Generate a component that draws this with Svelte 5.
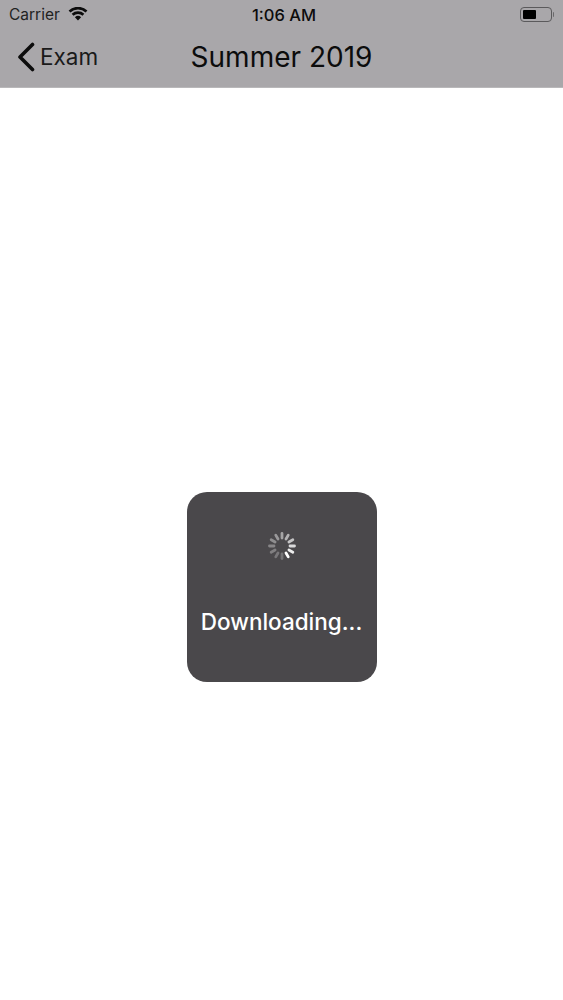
<script lang="ts">
  // spokes fade counter-clockwise from the brightest one, at 150deg
  const SPOKES = [0.58, 0.68, 0.8, 0.9, 1, 0.24, 0.26, 0.3, 0.34, 0.38, 0.44, 0.5];
</script>

<div class="screen">
  <header class="bar">
    <div class="status">
      <div class="status__left">
        <span class="carrier">Carrier</span>
        <svg class="wifi" width="20" height="14" viewBox="0 0 20 14" aria-hidden="true">
          <path d="M10 13.6 6.9 10.2a4.6 4.6 0 0 1 6.2 0Z" fill="#0c0c0c" />
          <path d="M5.500 8.700 3.700 6.800a9.200 9.200 0 0 1 12.600 0l-1.800 1.900a6.700 6.700 0 0 0-9 0Z" fill="#0c0c0c" />
          <path d="M2.400 5.400.6 3.500a13.800 13.800 0 0 1 18.800 0l-1.800 1.900a11.200 11.200 0 0 0-15.200 0Z" fill="#0c0c0c" />
        </svg>
      </div>
      <span class="time">1:06 AM</span>
      <div class="battery">
        <div class="battery__body"><div class="battery__fill"></div></div>
        <div class="battery__cap"></div>
      </div>
    </div>
    <nav class="nav">
      <div class="back">
        <svg width="20" height="30" viewBox="0 0 20 30" aria-hidden="true">
          <path d="M16.500 2.500 4 15l12.500 12.500" fill="none" stroke="#0c0c0c" stroke-width="3.600" stroke-linecap="round" stroke-linejoin="round" />
        </svg>
        <span>Exam</span>
      </div>
      <h1>Summer 2019</h1>
    </nav>
  </header>

  <main class="content">
    <div class="toast">
      <svg class="spinner" width="30" height="30" viewBox="-15 -15 30 30" aria-hidden="true">
        {#each SPOKES as o, i}
          <line
            x1="0"
            y1="-8"
            x2="0"
            y2="-12.500"
            stroke="#fff"
            stroke-width="2.800"
            stroke-linecap="round"
            opacity={o}
            transform="rotate({i * 30 + 30})"
          />
        {/each}
      </svg>
      <div class="label">Downloading...</div>
    </div>
  </main>
</div>

<style>
  :global(body) {
    background: #fff;
  }
  .screen {
    width: 563px;
    height: 1000px;
    display: flex;
    flex-direction: column;
    font-family: Inter, 'Liberation Sans', sans-serif;
    color: #0c0c0c;
    background: #fff;
  }
  .bar {
    height: 87px;
    flex: none;
    background: #a9a7aa;
    border-bottom: 1px solid #b9b8ba;
    box-sizing: content-box;
  }
  .status {
    height: 29px;
    display: grid;
    grid-template-columns: 1fr auto 1fr;
    align-items: center;
    padding: 0 9px;
  }
  .status__left {
    display: flex;
    align-items: center;
    gap: 8px;
  }
  .carrier {
    font-size: 15.500px;
    color: #222;
  }
  .wifi {
    margin-top: -1px;
  }
  .time {
    margin-left: 5px;
    font-size: 16.500px;
    font-weight: 500;
  }
  .battery {
    justify-self: end;
    display: flex;
    align-items: center;
    gap: 1px;
    margin-top: -1px;
  }
  .battery__body {
    width: 32px;
    height: 15px;
    box-sizing: border-box;
    border: 1px solid #5b5a5c;
    border-radius: 4px;
    padding: 2px;
  }
  .battery__fill {
    width: 13px;
    height: 100%;
    background: #000;
    border-radius: 1px;
  }
  .battery__cap {
    width: 1.500px;
    height: 5px;
    background: #6a696b;
    border-radius: 0 1px 1px 0;
  }
  .nav {
    height: 55px;
    display: grid;
    grid-template-columns: 1fr auto 1fr;
    align-items: center;
    padding: 0 16px;
  }
  .back {
    display: flex;
    align-items: center;
    gap: 4px;
    font-size: 22.500px;
    color: #1a1a1a;
  }
  .back svg {
    margin-top: 1px;
  }
  h1 {
    grid-column: 2;
    margin: 0;
    font-size: 28px;
    font-weight: 400;
    white-space: nowrap;
  }
  .content {
    flex: 1;
    display: flex;
    justify-content: center;
    padding-top: 404px;
  }
  .toast {
    width: 190px;
    height: 190px;
    background: #4a484b;
    border-radius: 20px;
    display: flex;
    flex-direction: column;
    align-items: center;
    padding-top: 39px;
    box-sizing: border-box;
  }
  .label {
    margin-top: 47px;
    color: #fff;
    font-size: 22.500px;
    font-weight: 500;
    white-space: nowrap;
  }
</style>
